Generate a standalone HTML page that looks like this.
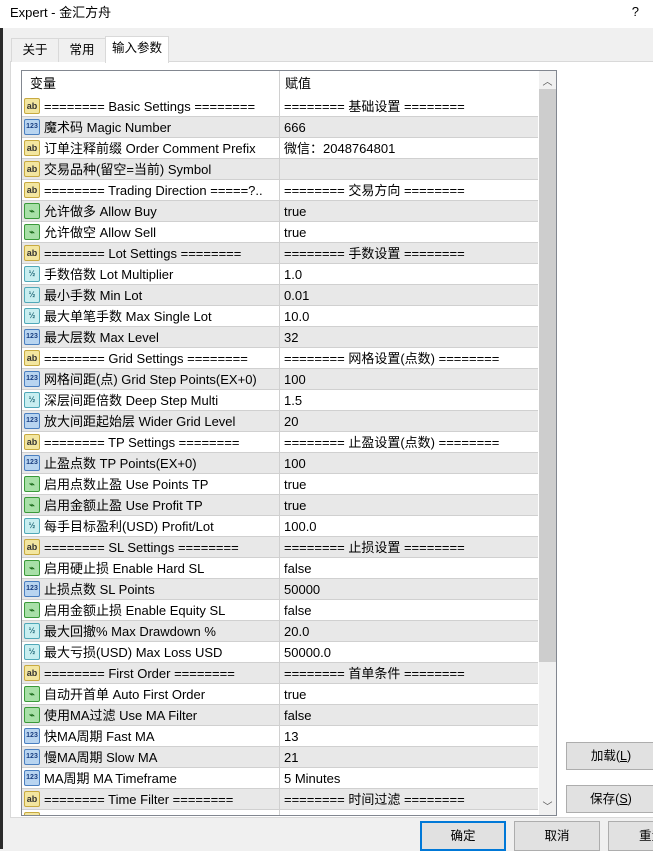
<!DOCTYPE html>
<html><head><meta charset="utf-8"><style>
*{margin:0;padding:0;box-sizing:border-box}
body{width:653px;height:849px;background:#f0f0f0;font-family:"Liberation Sans","Noto Sans CJK SC",sans-serif;font-size:13px;color:#000;position:relative;overflow:hidden}
.abs{position:absolute}
#title{left:0;top:0;width:653px;height:28px;background:#fff}
#title span{position:absolute;left:10px;top:5px;font-size:13px;line-height:16px}
#q{position:absolute;right:14px;top:4px;font-size:13px}
#lstrip{left:0;top:28px;width:3px;height:821px;background:#2b2b2b}
.tab{top:38px;height:24px;border:1px solid #d9d9d9;border-bottom:none;background:#f0f0f0;text-align:center;line-height:22px;font-size:12.5px}
#pane{left:10px;top:61px;width:650px;height:757px;background:#fff;border:1px solid #d9d9d9}
#list{left:21px;top:70px;width:536px;height:746px;border:1px solid #828790;background:#fff;overflow:hidden}
.hd{position:absolute;top:4px;height:17px;line-height:17px}
.row{position:absolute;left:0;width:516px;height:21px;border-bottom:1px solid #d0d0d0}
.g{background:#e8e8e8}
.row .n{position:absolute;left:22px;top:2px;height:17px;line-height:17px;white-space:nowrap;width:234px;overflow:hidden}
.row .v{position:absolute;left:262px;top:2px;height:17px;line-height:17px;white-space:nowrap}
.row .d{position:absolute;left:257px;top:0;width:1px;height:21px;background:#d0d0d0}
.ic{position:absolute;left:2px;top:2px;width:16px;height:16px;border-radius:2px;font-size:9px;line-height:14px;text-align:center;font-weight:bold;font-family:"Liberation Sans",sans-serif}
.ab{background:#f3e6a0;border:1px solid #c8aa40;color:#333}
.nm{background:#b8d4f0;border:1px solid #4a7fc0;color:#1a3e80;font-size:7px}
.bl{background:#a8e0a8;border:1px solid #3a9a3a;color:#1a6a1a}
.hf{background:#c8eef0;border:1px solid #50a8b8;color:#206878;font-size:8px}
#sb{left:517px;top:0;width:17px;height:744px;background:#f0f0f0}
#thumb{left:517px;top:18px;width:17px;height:573px;background:#cdcdcd}
.btn{background:#e1e1e1;border:1px solid #adadad;text-align:center;font-size:12.5px}
</style></head><body>
<div id="title" class="abs"><span>Expert - 金汇方舟</span><div id="q">?</div></div>
<div id="lstrip" class="abs"></div>
<div id="pane" class="abs"></div>
<div class="abs tab" style="left:11px;width:48px">关于</div>
<div class="abs tab" style="left:58px;width:48px">常用</div>
<div class="abs tab" style="left:105px;top:36px;width:64px;height:27px;background:#fff;line-height:22px">输入参数</div>
<div id="list" class="abs">
<div class="hd" style="left:8px">变量</div>
<div class="abs" style="left:257px;top:0;width:1px;height:25px;background:#d0d0d0"></div>
<div class="hd" style="left:263px">赋值</div>
<div id="rows"></div>
<div id="sb" class="abs"><div style="text-align:center;font-size:10px;color:#555;margin-top:2px">︿</div><div style="position:absolute;bottom:2px;width:17px;text-align:center;font-size:10px;color:#555">﹀</div></div>
<div id="thumb" class="abs"></div>
</div>
<div class="abs btn" style="left:566px;top:742px;width:90px;height:28px;line-height:26px">加载(<u>L</u>)</div>
<div class="abs btn" style="left:566px;top:785px;width:90px;height:28px;line-height:26px">保存(<u>S</u>)</div>
<div class="abs btn" style="left:420px;top:821px;width:86px;height:30px;line-height:26px;border:2px solid #0078d7">确定</div>
<div class="abs btn" style="left:514px;top:821px;width:86px;height:30px;line-height:28px">取消</div>
<div class="abs btn" style="left:608px;top:821px;width:86px;height:30px;line-height:28px;text-align:left;padding-left:30px">重置</div>
<script>
var R=[
["ab","======== Basic Settings ========","======== 基础设置 ========"],
["nm","魔术码 Magic Number","666"],
["ab","订单注释前缀 Order Comment Prefix","微信：2048764801"],
["ab","交易品种(留空=当前) Symbol",""],
["ab","======== Trading Direction =====?..","======== 交易方向 ========"],
["bl","允许做多 Allow Buy","true"],
["bl","允许做空 Allow Sell","true"],
["ab","======== Lot Settings ========","======== 手数设置 ========"],
["hf","手数倍数 Lot Multiplier","1.0"],
["hf","最小手数 Min Lot","0.01"],
["hf","最大单笔手数 Max Single Lot","10.0"],
["nm","最大层数 Max Level","32"],
["ab","======== Grid Settings ========","======== 网格设置(点数) ========"],
["nm","网格间距(点) Grid Step Points(EX+0)","100"],
["hf","深层间距倍数 Deep Step Multi","1.5"],
["nm","放大间距起始层 Wider Grid Level","20"],
["ab","======== TP Settings ========","======== 止盈设置(点数) ========"],
["nm","止盈点数 TP Points(EX+0)","100"],
["bl","启用点数止盈 Use Points TP","true"],
["bl","启用金额止盈 Use Profit TP","true"],
["hf","每手目标盈利(USD) Profit/Lot","100.0"],
["ab","======== SL Settings ========","======== 止损设置 ========"],
["bl","启用硬止损 Enable Hard SL","false"],
["nm","止损点数 SL Points","50000"],
["bl","启用金额止损 Enable Equity SL","false"],
["hf","最大回撤% Max Drawdown %","20.0"],
["hf","最大亏损(USD) Max Loss USD","50000.0"],
["ab","======== First Order ========","======== 首单条件 ========"],
["bl","自动开首单 Auto First Order","true"],
["bl","使用MA过滤 Use MA Filter","false"],
["nm","快MA周期 Fast MA","13"],
["nm","慢MA周期 Slow MA","21"],
["nm","MA周期 MA Timeframe","5 Minutes"],
["ab","======== Time Filter ========","======== 时间过滤 ========"],
["ab","",""]];
var L={ab:"ab",nm:"123",bl:"⌁",hf:"½"};
var h="";
R.forEach(function(r,i){h+='<div class="row'+(i%2?' g':'')+'" style="top:'+(25+i*21)+'px"><div class="ic '+r[0]+'">'+L[r[0]]+'</div><div class="n">'+r[1]+'</div><div class="d"></div><div class="v">'+r[2]+'</div></div>';});
document.getElementById("rows").innerHTML=h;
</script>
</body></html>
